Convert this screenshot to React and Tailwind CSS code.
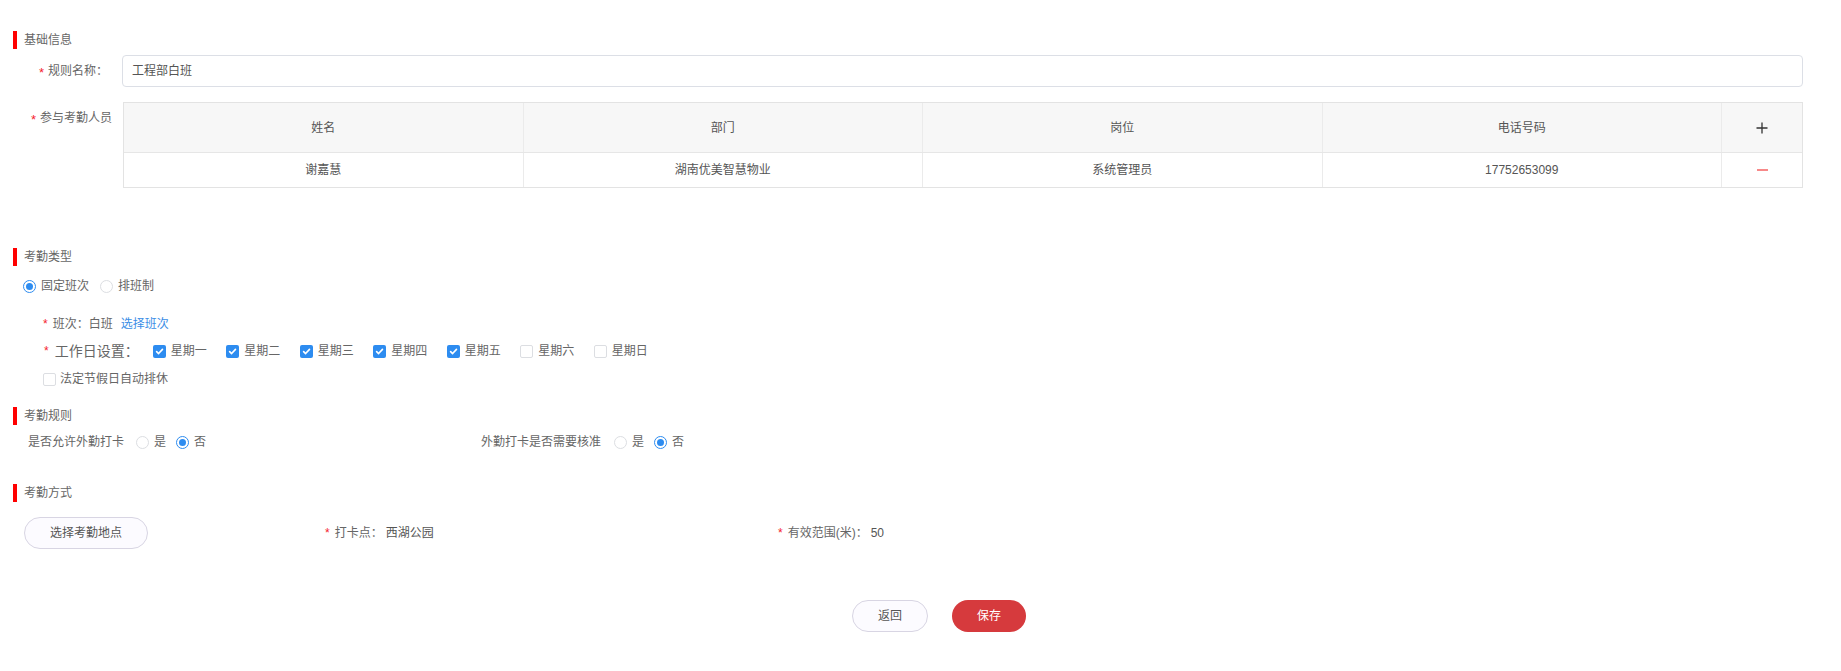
import React from "react";

const FONT = { fontFamily: '"Liberation Sans", "Noto Sans CJK SC", sans-serif' };

function SectionHeader({ title }) {
  return (
    <div className="flex items-center h-[18px] ml-[13px]">
      <span className="w-[4px] h-[18px] bg-[#ff0000]" />
      <span className="ml-[7px] text-[12px] leading-[18px] text-[#666]">{title}</span>
    </div>
  );
}

function Radio({ checked, label }) {
  return (
    <span className="inline-flex items-center">
      {checked ? (
        <span className="w-[13px] h-[13px] rounded-full border border-[#2d8cf0] flex items-center justify-center bg-white">
          <span className="w-[7px] h-[7px] rounded-full bg-[#2d8cf0]" />
        </span>
      ) : (
        <span className="w-[13px] h-[13px] rounded-full border border-[#dcdee2] bg-white" />
      )}
      <span className="ml-[5px] text-[12px] leading-[16px] text-[#666]">{label}</span>
    </span>
  );
}

function Checkbox({ checked, label }) {
  return (
    <span className="inline-flex items-center">
      {checked ? (
        <span className="w-[13px] h-[13px] rounded-[2px] bg-[#2d8cf0] flex items-center justify-center">
          <svg width="9" height="9" viewBox="0 0 10 10">
            <path d="M1.8 5.2 L4 7.3 L8.3 2.6" fill="none" stroke="#fff" strokeWidth="1.8" strokeLinecap="round" strokeLinejoin="round" />
          </svg>
        </span>
      ) : (
        <span className="w-[13px] h-[13px] rounded-[2px] border border-[#dcdee2] bg-white" />
      )}
      <span className="ml-[5px] text-[12px] leading-[16px] text-[#666]">{label}</span>
    </span>
  );
}

const Star = ({ cls = "" }) => <span className={`text-[#f5222d] ${cls}`}>*</span>;

export default function App() {
  const days = [
    ["星期一", true],
    ["星期二", true],
    ["星期三", true],
    ["星期四", true],
    ["星期五", true],
    ["星期六", false],
    ["星期日", false],
  ];
  return (
    <div style={FONT} className="w-full min-h-[671px] bg-white pt-[31px] text-[12px] text-[#666]">
      <SectionHeader title="基础信息" />

      {/* 规则名称 */}
      <div className="flex items-center mt-[6px] mr-[38px]">
        <div className="w-[122px] shrink-0 flex justify-end items-center pr-[14px] text-[12px] text-[#666]">
          <span className="text-[#f5222d] text-[13px] mr-[4px] leading-none mt-[3px]">*</span>
          <span>规则名称：</span>
        </div>
        <div className="flex-1 h-[32px] border border-[#dcdfe6] rounded-[4px] flex items-center pl-[9px] text-[12px] text-[#555]">
          工程部白班
        </div>
      </div>

      {/* 参与考勤人员 */}
      <div className="flex mt-[15px] mr-[38px]">
        <div className="w-[123px] shrink-0 flex justify-end items-center pr-[11px] h-[18px] mt-[7px] text-[12px] text-[#666]">
          <span className="text-[#f5222d] text-[13px] mr-[4px] leading-none mt-[3px]">*</span>
          <span>参与考勤人员</span>
        </div>
        <div className="flex-1 border border-[#e3e3e3]">
          <div className="grid grid-cols-[1fr_1fr_1fr_1fr_80px] h-[50px] bg-[#f7f7f7] border-b border-[#e6e6e6] text-[12px] text-[#555]">
            <div className="flex items-center justify-center border-r border-[#ebebeb]">姓名</div>
            <div className="flex items-center justify-center border-r border-[#ebebeb]">部门</div>
            <div className="flex items-center justify-center border-r border-[#ebebeb]">岗位</div>
            <div className="flex items-center justify-center border-r border-[#ebebeb]">电话号码</div>
            <div className="flex items-center justify-center">
              <svg width="12" height="12" viewBox="0 0 12 12">
                <path d="M6 0.5 V11.5 M0.5 6 H11.5" stroke="#333" strokeWidth="1.3" />
              </svg>
            </div>
          </div>
          <div className="grid grid-cols-[1fr_1fr_1fr_1fr_80px] h-[34px] text-[12px] text-[#555]">
            <div className="flex items-center justify-center border-r border-[#ebebeb]">谢嘉慧</div>
            <div className="flex items-center justify-center border-r border-[#ebebeb]">湖南优美智慧物业</div>
            <div className="flex items-center justify-center border-r border-[#ebebeb]">系统管理员</div>
            <div className="flex items-center justify-center border-r border-[#ebebeb]">17752653099</div>
            <div className="flex items-center justify-center">
              <span className="w-[11px] h-[2px] bg-[#f78989]" />
            </div>
          </div>
        </div>
      </div>

      {/* 考勤类型 */}
      <div className="mt-[60px]">
        <SectionHeader title="考勤类型" />
      </div>
      <div className="flex items-center h-[16px] mt-[12px] ml-[23px] gap-[11px]">
        <Radio checked label="固定班次" />
        <Radio label="排班制" />
      </div>
      <div className="flex items-center h-[16px] mt-[22px] ml-[43px] text-[12px]">
        <Star cls="text-[12px] mr-[5px]" />
        <span className="text-[#666]">班次：白班</span>
        <span className="ml-[8px] text-[#3a8ee6]">选择班次</span>
      </div>
      <div className="flex items-center h-[18px] mt-[10px] ml-[44px]">
        <Star cls="text-[12px] mr-[6px]" />
        <span className="text-[14px] text-[#666] w-[98px] shrink-0">工作日设置：</span>
        <div className="flex items-center gap-[19.5px]">
          {days.map(([d, c]) => (
            <Checkbox key={d} checked={c} label={d} />
          ))}
        </div>
      </div>
      <div className="flex items-center h-[16px] mt-[11px] ml-[43px]">
        <span className="w-[13px] h-[13px] rounded-[2px] border border-[#dcdee2] bg-white" />
        <span className="ml-[4px] text-[12px] text-[#666]">法定节假日自动排休</span>
      </div>

      {/* 考勤规则 */}
      <div className="mt-[20px]">
        <SectionHeader title="考勤规则" />
      </div>
      <div className="flex items-center h-[16px] mt-[9px] ml-[28px]">
        <div className="w-[453px] flex items-center">
          <span className="text-[#666]">是否允许外勤打卡</span>
          <span className="ml-[12px] flex items-center gap-[10px]">
            <Radio label="是" />
            <Radio checked label="否" />
          </span>
        </div>
        <div className="flex items-center">
          <span className="text-[#666]">外勤打卡是否需要核准</span>
          <span className="ml-[13px] flex items-center gap-[10px]">
            <Radio label="是" />
            <Radio checked label="否" />
          </span>
        </div>
      </div>

      {/* 考勤方式 */}
      <div className="mt-[34px]">
        <SectionHeader title="考勤方式" />
      </div>
      <div className="flex items-center h-[32px] mt-[15px] ml-[24px]">
        <div className="w-[124px] h-[32px] rounded-full border border-[#d8d5e3] bg-[#fcfbff] flex items-center justify-center text-[12px] text-[#555]">
          选择考勤地点
        </div>
        <div className="ml-[177px] w-[453px] flex items-center">
          <Star cls="text-[12px] mr-[5px]" />
          <span className="text-[#666]">打卡点：</span>
          <span className="ml-[3px] text-[#555]">西湖公园</span>
        </div>
        <div className="flex items-center">
          <Star cls="text-[12px] mr-[5px]" />
          <span className="text-[#666]">有效范围(米)：</span>
          <span className="ml-[3px] text-[#555]">50</span>
        </div>
      </div>

      {/* 按钮 */}
      <div className="flex justify-center items-center mt-[51px] pl-[37px] gap-[24px] pb-[40px]">
        <div className="w-[76px] h-[32px] rounded-full border border-[#d8d5e3] bg-[#fcfbff] flex items-center justify-center text-[12px] text-[#555]">
          返回
        </div>
        <div className="w-[74px] h-[32px] rounded-full bg-[#d63a3d] flex items-center justify-center text-[12px] text-white">
          保存
        </div>
      </div>
    </div>
  );
}
